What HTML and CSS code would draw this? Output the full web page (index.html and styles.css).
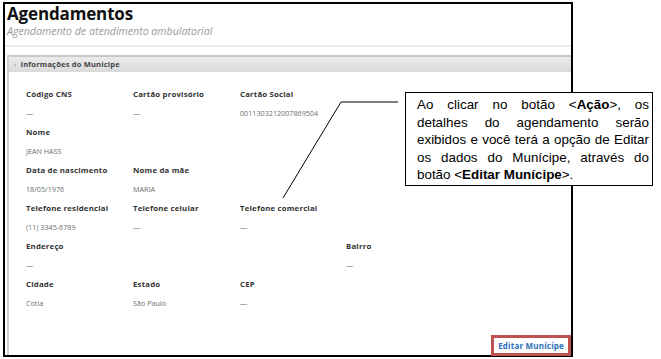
FILE: index.html
```html
<!DOCTYPE html>
<html lang="pt-BR">
<head>
<meta charset="utf-8">
<title>Agendamentos</title>
<link rel="stylesheet" href="styles.css">
</head>
<body>
<div class="stage">
  <div class="frame">
    <header class="head">
      <h1 class="title">Agendamentos</h1>
      <p class="subtitle">Agendamento de atendimento ambulatorial</p>
    </header>
    <div class="sep"></div>
    <section class="panel">
      <div class="panel-head"><span class="chev">›</span>Informações do Munícipe</div>
      <div class="grid">
        <div class="lbl">Código CNS</div><div class="lbl">Cartão provisório</div><div class="lbl">Cartão Social</div><div></div>
        <div class="val">—</div><div class="val">—</div><div class="val">0011303212007869504</div><div></div>
        <div class="lbl">Nome</div><div></div><div></div><div></div>
        <div class="val">JEAN HASS</div><div></div><div></div><div></div>
        <div class="lbl">Data de nascimento</div><div class="lbl">Nome da mãe</div><div></div><div></div>
        <div class="val">18/05/1976</div><div class="val">MARIA</div><div></div><div></div>
        <div class="lbl">Telefone residencial</div><div class="lbl">Telefone celular</div><div class="lbl">Telefone comercial</div><div></div>
        <div class="val">(11) 3345-6789</div><div class="val">—</div><div class="val">—</div><div></div>
        <div class="lbl">Endereço</div><div></div><div></div><div class="lbl">Bairro</div>
        <div class="val">—</div><div></div><div></div><div class="val">—</div>
        <div class="lbl">Cidade</div><div class="lbl">Estado</div><div class="lbl">CEP</div><div></div>
        <div class="val">Cotia</div><div class="val">São Paulo</div><div class="val">—</div><div></div>
      </div>
      <div class="actions"><button class="edit">Editar Munícipe</button></div>
    </section>
  </div>
  <svg class="pointer" width="661" height="359" viewBox="0 0 661 359"><polyline points="283,198 341,102 398,102" fill="none" stroke="#000" stroke-width="1"/></svg>
  <div class="callout">
    <span class="cl">Ao clicar no botão &lt;<b>Ação</b>&gt;, os</span>
    <span class="cl">detalhes do agendamento serão</span>
    <span class="cl">exibidos e você terá a opção de Editar</span>
    <span class="cl">os dados do Munícipe, através do</span>
    <span class="cl last">botão &lt;<b>Editar Munícipe</b>&gt;.</span>
  </div>
</div>
</body>
</html>
```
FILE: styles.css
```css
* { box-sizing: border-box; }
html, body { margin: 0; padding: 0; background: #fff; }
.stage {
  position: relative;
  width: 661px;
  height: 359px;
  overflow: hidden;
  padding: 2px 0 0 3px;
}
.frame {
  width: 570px;
  height: 355px;
  border: 2px solid #000;
  display: flex;
  flex-direction: column;
  font-family: "Open Sans", sans-serif;
}
.head { padding: 0 0 0 2px; }
.title {
  margin: 0;
  font-size: 17px;
  font-weight: 700;
  line-height: 20px;
  color: #111;
  letter-spacing: -0.15px;
}
.subtitle {
  margin: 0;
  font-size: 10.6px;
  font-style: italic;
  color: #9a9a9a;
  line-height: 14px;
}
.sep {
  margin-top: 7px;
  height: 2px;
  background: #ececec;
}
.panel {
  margin: 8px 0 0 2px;
  flex: 1;
  border-left: 2px solid #d2d2d2;
  display: flex;
  flex-direction: column;
}
.panel-head {
  height: 17px;
  border-top: 2px solid #c8c8c8;
  background: linear-gradient(#ebebeb, #dadada);
  font-size: 7.5px;
  font-weight: 700;
  color: #444;
  line-height: 15px;
  padding-left: 5px;
  letter-spacing: 0.2px;
}
.chev { color: #888; margin-right: 4px; font-weight: 400; }
.grid {
  display: grid;
  grid-template-columns: 107px 107px 106px 107px;
  grid-auto-rows: 19px;
  padding: 13px 0 0 17px;
}
.lbl {
  font-size: 7.8px;
  font-weight: 700;
  color: #333;
  line-height: 19px;
  white-space: nowrap;
  letter-spacing: 0.2px;
}
.val {
  font-size: 7.2px;
  color: #6e6e6e;
  line-height: 19px;
  white-space: nowrap;
}
.actions {
  margin-top: auto;
  display: flex;
  justify-content: flex-end;
}
.edit {
  font-family: "Open Sans", sans-serif;
  font-size: 8px;
  font-weight: 700;
  color: #2a6fbb;
  background: #fff;
  border: 3px solid #c0504d;
  padding: 1px 4px;
  line-height: 13px;
  margin: 0 0 -1px 0;
  letter-spacing: 0.2px;
}
.pointer {
  position: absolute;
  left: 0;
  top: 0;
  pointer-events: none;
}
.callout {
  position: absolute;
  left: 405px;
  top: 92px;
  width: 248px;
  height: 94px;
  border: 1px solid #000;
  background: #fff;
  padding: 3px 3px 0 11px;
  font-family: "Liberation Sans", Arial, sans-serif;
  font-size: 13.4px;
  line-height: 17.5px;
  color: #000;
}
.cl {
  display: block;
  white-space: nowrap;
  text-align: justify;
  text-align-last: justify;
}
.cl.last { text-align-last: left; }
```
